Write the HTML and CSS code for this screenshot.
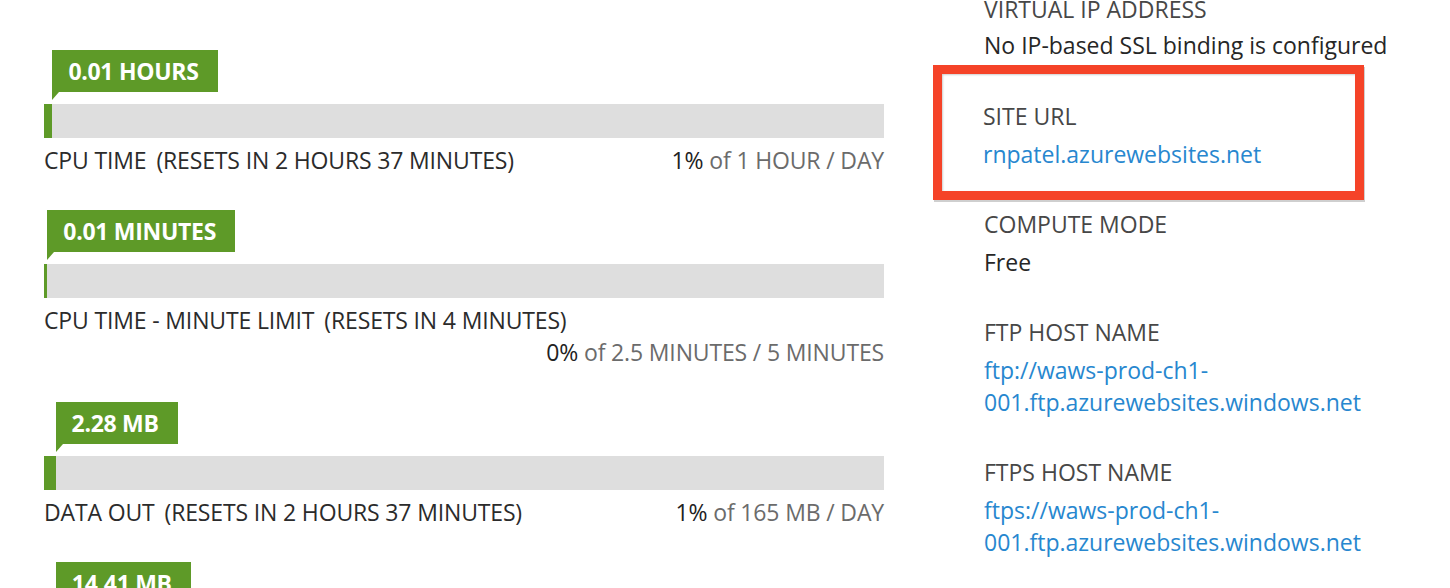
FILE: index.html
```html
<!DOCTYPE html>
<html lang="en">
<head>
<meta charset="utf-8">
<title>Usage overview</title>
<link rel="stylesheet" href="styles.css">
</head>
<body>
<div class="page">
  <section class="usage">
    <div class="meter" style="--pct: 1%">
      <div class="flag">0.01 HOURS</div>
      <div class="bar"><div class="fill"></div></div>
      <div class="caption">
        <span class="name">CPU TIME<span class="reset">(RESETS IN 2 HOURS 37 MINUTES)</span></span>
        <span class="quota"><b>1%</b> of 1 HOUR / DAY</span>
      </div>
    </div>
    <div class="meter" style="--pct: 0.4%">
      <div class="flag">0.01 MINUTES</div>
      <div class="bar"><div class="fill"></div></div>
      <div class="caption">
        <span class="name">CPU TIME - MINUTE LIMIT<span class="reset">(RESETS IN 4 MINUTES)</span></span>
        <span class="quota"><b>0%</b> of 2.5 MINUTES / 5 MINUTES</span>
      </div>
    </div>
    <div class="meter" style="--pct: 1.38%">
      <div class="flag">2.28 MB</div>
      <div class="bar"><div class="fill"></div></div>
      <div class="caption">
        <span class="name">DATA OUT<span class="reset">(RESETS IN 2 HOURS 37 MINUTES)</span></span>
        <span class="quota"><b>1%</b> of 165 MB / DAY</span>
      </div>
    </div>
    <div class="meter" style="--pct: 1.41%">
      <div class="flag">14.41 MB</div>
      <div class="bar"><div class="fill"></div></div>
    </div>
  </section>

  <aside class="details">
    <div class="item first">
      <div class="label">VIRTUAL IP ADDRESS</div>
      <div class="value">No IP-based SSL binding is configured</div>
    </div>
    <div class="item highlight">
      <div class="label">SITE URL</div>
      <div class="value"><a href="#">rnpatel.azurewebsites.net</a></div>
    </div>
    <div class="item">
      <div class="label">COMPUTE MODE</div>
      <div class="value">Free</div>
    </div>
    <div class="item">
      <div class="label">FTP HOST NAME</div>
      <div class="value"><a href="#">ftp://waws-prod-ch1-001.ftp.azurewebsites.windows.net</a></div>
    </div>
    <div class="item">
      <div class="label">FTPS HOST NAME</div>
      <div class="value"><a href="#">ftps://waws-prod-ch1-001.ftp.azurewebsites.windows.net</a></div>
    </div>
  </aside>
</div>
</body>
</html>
```

FILE: styles.css
```css
html, body {
  margin: 0;
  padding: 0;
  background: #ffffff;
  height: 588px;
  overflow: hidden;
}

body {
  font-family: "Open Sans", "Noto Sans", sans-serif;
  font-size: 23px;
  color: #333333;
}

.page {
  display: flex;
  align-items: flex-start;
  padding-left: 44px;
}

.usage {
  width: 840px;
  flex: none;
  padding-top: 50px;
}

.meter {
  margin-bottom: 34px;
}

.flag {
  position: relative;
  display: inline-block;
  margin-left: var(--pct);
  height: 42px;
  line-height: 42px;
  padding: 0 19px 0 16px;
  background: #5e9a28;
  color: #ffffff;
  font-weight: 700;
  font-size: 23px;
  letter-spacing: -0.3px;
}

.flag::after {
  content: "";
  position: absolute;
  left: 0;
  top: 100%;
  width: 0;
  height: 0;
  border-top: 8px solid #5e9a28;
  border-right: 7px solid transparent;
}

.bar {
  margin-top: 12px;
  height: 34px;
  background: #dedede;
}

.fill {
  width: var(--pct);
  height: 100%;
  background: #5e9a28;
}

.caption {
  margin-top: 6px;
  display: flex;
  flex-wrap: wrap;
  justify-content: space-between;
  line-height: 32px;
  color: #2b2b2b;
  letter-spacing: -0.15px;
}

.reset {
  margin-left: 10px;
}

.quota {
  margin-left: auto;
  color: #6b6b6b;
}

.quota b {
  font-weight: 400;
  color: #222222;
}

.details {
  width: 420px;
  flex: none;
  margin-left: 100px;
  margin-top: -7px;
}

.item {
  margin-bottom: 38px;
}

.label {
  line-height: 32px;
  color: #474747;
}

.value {
  margin-top: 6px;
  line-height: 32px;
  color: #262626;
}

.value a {
  color: #2787cf;
  text-decoration: none;
}

.item.first {
  margin-bottom: 4px;
}

.item.first .value {
  margin-top: 4px;
}

.highlight {
  margin: 0 0 8px -51px;
  width: 372px;
  padding: 26px 0 21px 41px;
  border: 9px solid #f54328;
  box-shadow: 1px 2px 0 #cfcfcf, inset 1px 1px 2px #cfcfcf;
}
```
